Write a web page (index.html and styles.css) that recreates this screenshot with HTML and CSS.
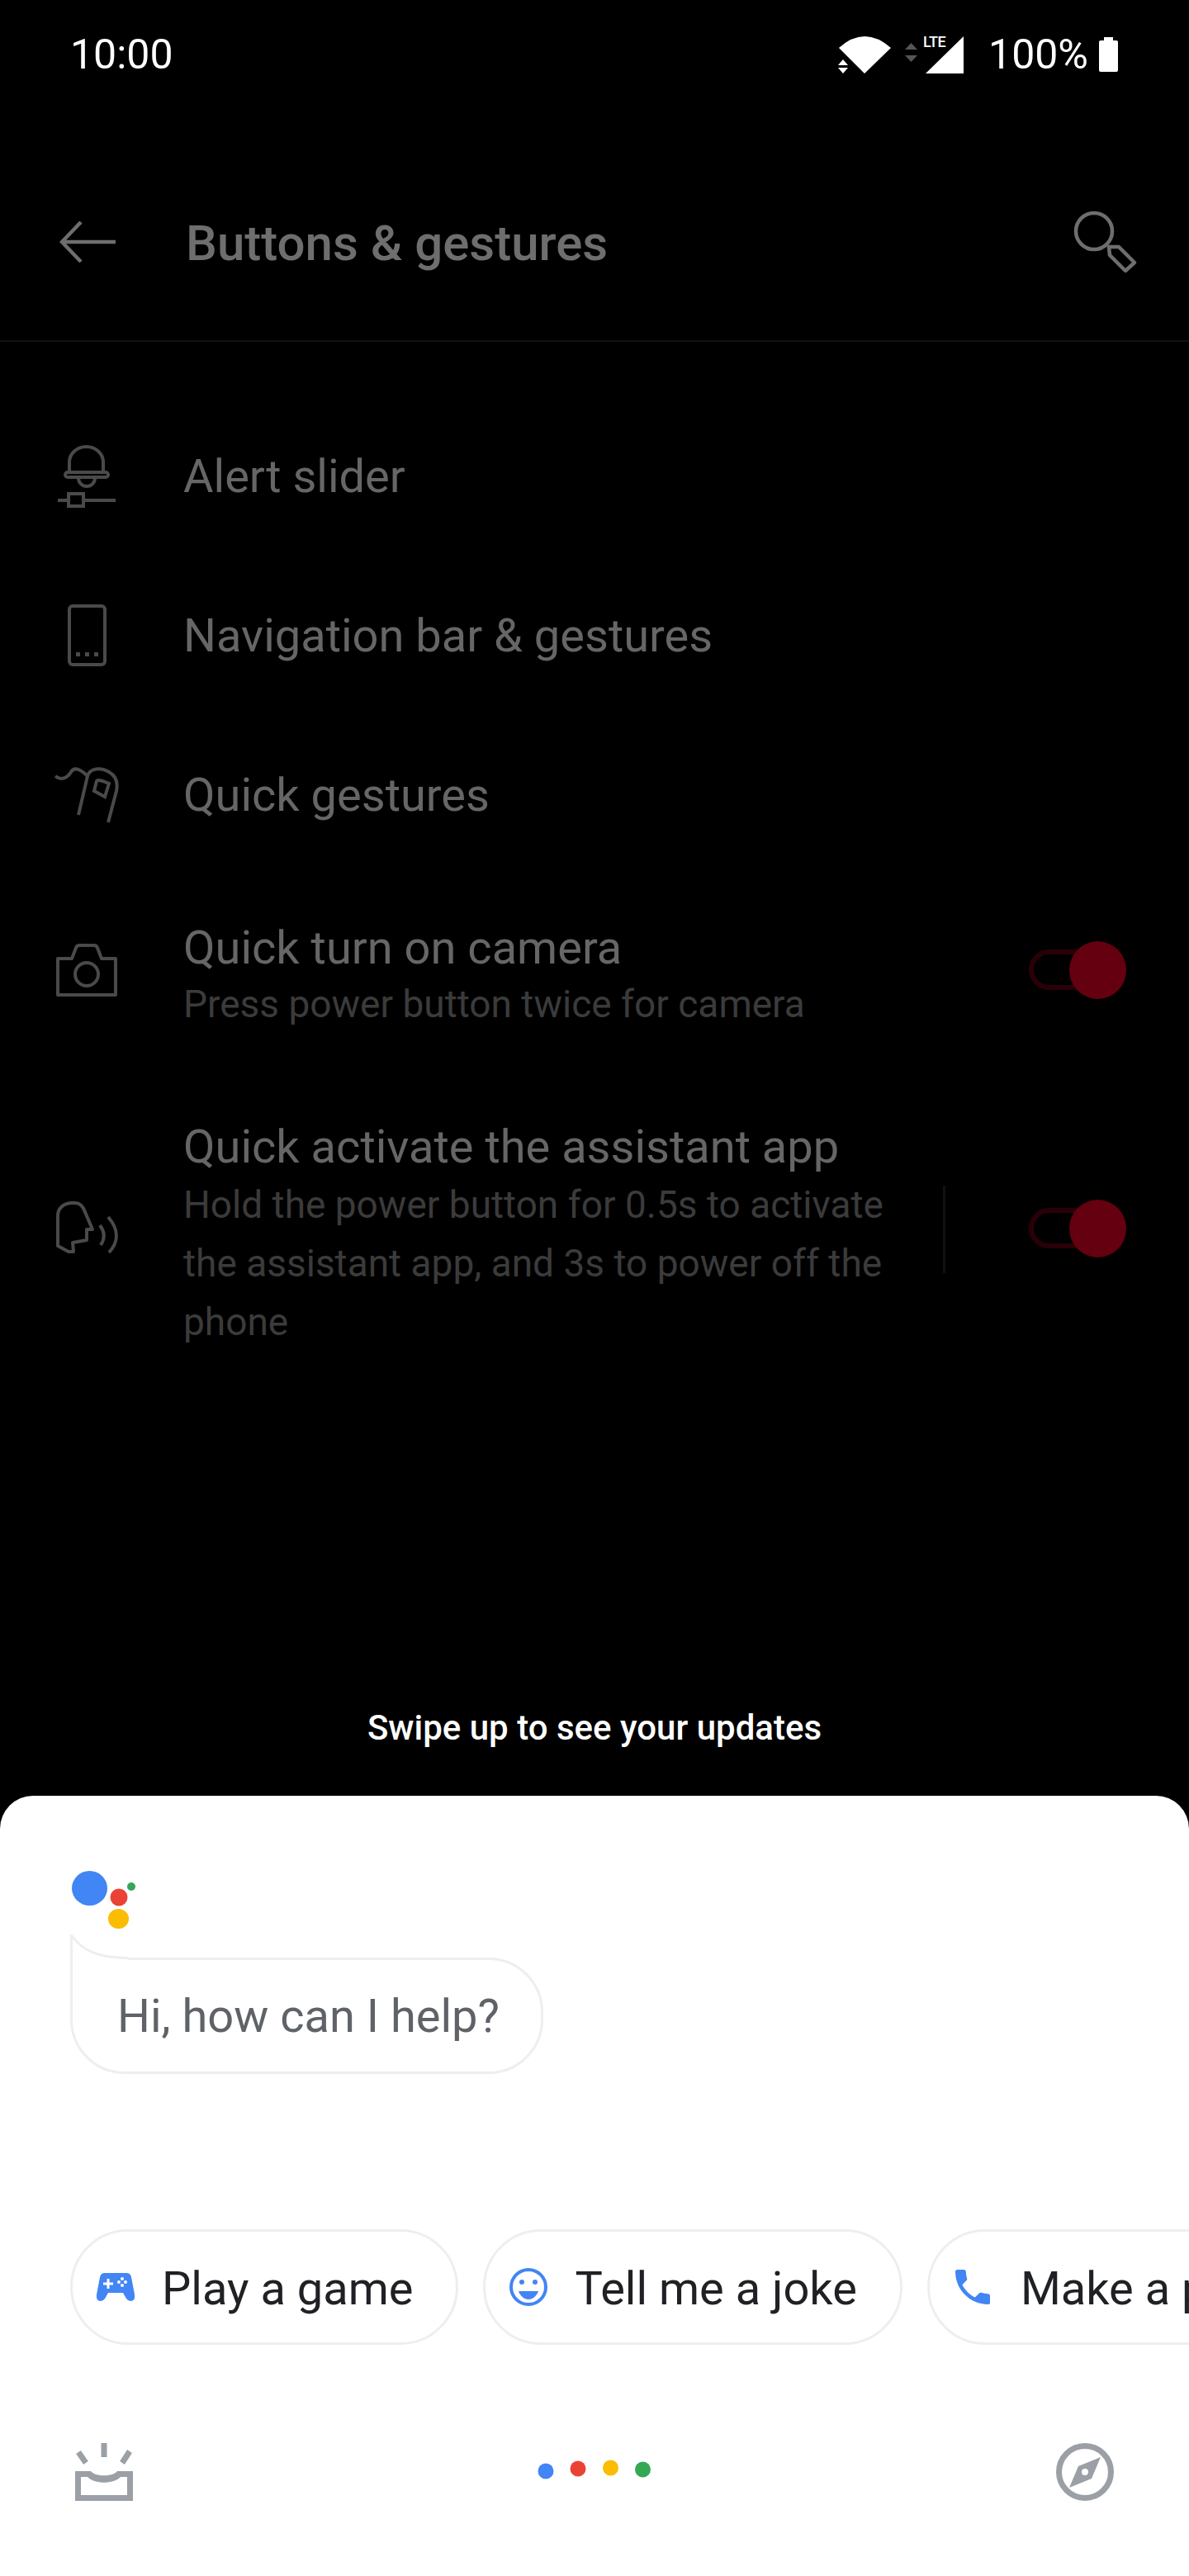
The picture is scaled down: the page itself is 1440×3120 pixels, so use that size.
FILE: index.html
```html
<!DOCTYPE html>
<html lang="en">
<head>
  <meta charset="UTF-8">
  <meta name="viewport" content="width=device-width, initial-scale=1.0">
  <title>Buttons &amp; gestures</title>
  <link rel="stylesheet" href="styles.css">
</head>
<body>

  <div class="screen">

    <div class="status-bar">
      <span class="clock">10:00</span>
      <div class="status-icons">
        <svg class="ic-wifi" width="64" height="45" viewBox="0 0 64 45">
          <path fill="#fff" d="M1 14Q32-14 64 14L32 45Z"/>
          <path fill="#000" d="M0 27H14V45H0Z"/>
          <path fill="#fff" d="M6 28L12 35H0ZM0 38H12L6 45Z"/>
        </svg>
        <svg class="ic-data" width="15" height="23" viewBox="0 0 15 23">
          <path fill="#555" d="M7.500 0L15 8H0ZM0 15H15L7.500 23Z"/>
        </svg>
        <div class="signal">
          <svg width="46" height="45" viewBox="0 0 46 45">
            <path fill="#fff" d="M46 0V45H0Z"/>
          </svg>
          <span class="lte">LTE</span>
        </div>
        <span class="battery-text">100%</span>
        <svg class="ic-battery" width="23" height="42" viewBox="0 0 23 42">
          <path fill="#fff" d="M6 0H17V4H21Q23 4 23 6V40Q23 42 21 42H2Q0 42 0 40V6Q0 4 2 4H6Z"/>
        </svg>
      </div>
    </div>

    <div class="toolbar">
      <svg class="back" width="68" height="50" viewBox="0 0 68 50">
        <path fill="none" stroke="#6e6e6e" stroke-width="4.500" d="M68 25H3M26 1L3 25L26 49"/>
      </svg>
      <h1 class="title">Buttons &amp; gestures</h1>
      <svg class="search" width="78" height="78" viewBox="0 0 78 78">
        <g fill="none" stroke="#6e6e6e" stroke-width="4.500" stroke-linejoin="round">
          <circle cx="26" cy="27" r="22"/>
          <path d="M44 46H56L75 65L64 75L45 56Z"/>
        </g>
      </svg>
    </div>

    <div class="list">
      <div class="row">
        <div class="row-icon">
          <svg width="70" height="76" viewBox="0 0 70 76">
            <g fill="none" stroke="#4a4a4a" stroke-width="4">
              <path d="M14 35V21A20.500 19 0 0 1 55 21V35"/>
              <rect x="9" y="33" width="52" height="6" rx="3"/>
              <path d="M25 40A10 10 0 0 0 45 40"/>
              <path d="M0 67H13M31 67H70"/>
              <rect x="13" y="59" width="18" height="15"/>
            </g>
          </svg>
        </div>
        <div class="row-text"><div class="row-title">Alert slider</div></div>
      </div>

      <div class="row">
        <div class="row-icon">
          <svg width="47" height="75" viewBox="0 0 47 75">
            <rect x="2" y="2" width="43" height="71" rx="4" fill="none" stroke="#4a4a4a" stroke-width="4"/>
            <path fill="#4a4a4a" d="M10 58H15V63H10ZM21 58H26V63H21ZM32 58H37V63H32Z"/>
          </svg>
        </div>
        <div class="row-text"><div class="row-title">Navigation bar &amp; gestures</div></div>
      </div>

      <div class="row">
        <div class="row-icon">
          <svg width="78" height="70" viewBox="0 0 78 70">
            <g fill="none" stroke="#4a4a4a" stroke-width="4">
              <path d="M1 12C8 18 16 14 20 7C24 0 32 4 40 12"/>
              <path d="M29 59L40 12C43 2 56 1 66 7C75 12 77 20 75 30L65 68"/>
              <path d="M48 30L51 18Q52 16 58 18L66 21L61 37Z"/>
            </g>
          </svg>
        </div>
        <div class="row-text"><div class="row-title">Quick gestures</div></div>
      </div>

      <div class="row row-camera">
        <div class="row-icon">
          <svg width="76" height="64" viewBox="0 0 76 64">
            <g fill="none" stroke="#4a4a4a" stroke-width="4" stroke-linejoin="round">
              <path d="M3 18H20L25 5Q26 2 29 2H47Q50 2 51 5L56 18H73V62H3Z"/>
              <circle cx="38" cy="37" r="14"/>
            </g>
          </svg>
        </div>
        <div class="row-text">
          <div class="row-title">Quick turn on camera</div>
          <div class="row-sub">Press power button twice for camera</div>
        </div>
        <div class="toggle"><span class="toggle-track"></span><span class="toggle-thumb"></span></div>
      </div>

      <div class="row row-assistant">
        <div class="row-icon">
          <svg width="90" height="76" viewBox="0 0 90 76">
            <g fill="none" stroke="#4a4a4a" stroke-width="4" stroke-linejoin="round">
              <path d="M10 60V23C10 14 18 8 27 8H31C38 8 41 13 43 19L52 40H45V53L28 56L29 67H23Z"/>
              <path d="M61 35Q70 47 62 59"/>
              <path d="M71 25C84 40 84 55 72 68"/>
            </g>
          </svg>
        </div>
        <div class="row-text">
          <div class="row-title">Quick activate the assistant app</div>
          <div class="row-sub">Hold the power button for 0.5s to activate the assistant app, and 3s to power off the phone</div>
        </div>
        <div class="row-divider"></div>
        <div class="toggle"><span class="toggle-track"></span><span class="toggle-thumb"></span></div>
      </div>
    </div>

    <div class="swipe-hint">Swipe up to see your updates</div>

    <div class="sheet">
      <svg class="logo" width="78" height="70" viewBox="0 0 78 70">
        <ellipse cx="21.500" cy="21" rx="21.500" ry="21" fill="#4285f4"/>
        <ellipse cx="57" cy="32" rx="10.500" ry="10.500" fill="#ea4335"/>
        <ellipse cx="72" cy="19" rx="5" ry="5" fill="#34a853"/>
        <ellipse cx="56.500" cy="58" rx="12.500" ry="12" fill="#fbbc04"/>
      </svg>

      <div class="bubble">
        <svg class="bubble-tail" width="70" height="34" viewBox="0 0 70 34">
          <path fill="#fff" d="M1.500 0V34H70V27C35 28 15 20 1.500 2Z"/>
          <path fill="none" stroke="#eee" stroke-width="3" d="M1.500 34V1C15 20 35 28.500 70 28.500"/>
        </svg>
        Hi, how can I help?
      </div>

      <div class="chips">
        <div class="chip">
          <svg width="46" height="36" viewBox="0 0 46 36">
            <path fill="#4285f4" d="M10 1H36Q41 1 42 6L46 27Q47 35 41 35Q38 35 36 32L32 25H14L10 32Q8 35 5 35Q-1 35 0 27L4 6Q5 1 10 1Z"/>
            <path fill="#fff" d="M12.500 8H15.500V12.500H20V15.500H15.500V20H12.500V15.500H8V12.500H12.500Z"/>
            <g fill="#fff">
              <circle cx="31" cy="8" r="2"/>
              <circle cx="31" cy="16" r="2"/>
              <circle cx="27" cy="12" r="2"/>
              <circle cx="35" cy="12" r="2"/>
            </g>
          </svg>
          <span>Play a game</span>
        </div>
        <div class="chip">
          <svg width="46" height="46" viewBox="0 0 46 46">
            <circle cx="23" cy="23" r="21" fill="none" stroke="#4285f4" stroke-width="4"/>
            <circle cx="15" cy="17" r="3" fill="#4285f4"/>
            <circle cx="31" cy="17" r="3" fill="#4285f4"/>
            <path fill="#4285f4" d="M11 28H35C33 34 28 38 23 38C18 38 13 34 11 28Z"/>
          </svg>
          <span>Tell me a joke</span>
        </div>
        <div class="chip chip-call">
          <svg width="42" height="42" viewBox="3 3 18 18">
            <path fill="#4285f4" d="M6.620 10.790c1.440 2.830 3.760 5.140 6.590 6.590l2.200-2.200c.27-.27.67-.36 1.020-.24 1.120.37 2.330.57 3.570.57.55 0 1 .45 1 1V20c0 .55-.45 1-1 1-9.390 0-17-7.610-17-17 0-.55.45-1 1-1h3.500c.55 0 1 .45 1 1 0 1.250.2 2.450.57 3.570.11.35.03.74-.25 1.020l-2.200 2.200z"/>
          </svg>
          <span>Make a phone call</span>
        </div>
      </div>

      <div class="bottom-nav">
        <svg width="70" height="70" viewBox="0 0 70 70">
          <path fill="none" stroke="#9aa0a6" stroke-width="7" d="M35 0V17M4 11L13 24M66 10L57 24"/>
          <path fill="#9aa0a6" fill-rule="evenodd" d="M0 34H19C24 41 46 41 51 34H70V70H0ZM7 41V63H63V41H55C47 50 23 50 15 41Z"/>
        </svg>
        <svg class="dots" width="138" height="24" viewBox="0 0 138 24">
          <circle cx="10" cy="14" r="9.500" fill="#4285f4"/>
          <circle cx="49" cy="11" r="9.500" fill="#ea4335"/>
          <circle cx="88.500" cy="10" r="9.500" fill="#fbbc04"/>
          <circle cx="127.500" cy="12" r="9.500" fill="#34a853"/>
        </svg>
        <svg width="70" height="70" viewBox="0 0 70 70">
          <circle cx="35" cy="35" r="31.500" fill="none" stroke="#9aa0a6" stroke-width="7"/>
          <path fill="#9aa0a6" d="M54 17L43 43L16 54L27 28Z"/>
          <circle cx="35" cy="35" r="4" fill="#fff"/>
        </svg>
      </div>
    </div>

  </div>

</body>
</html>
```

FILE: styles.css
```css
html, body {
  margin: 0;
  padding: 0;
  background-color: #000;
}
svg {
  display: block;
  flex-shrink: 0;
}
.screen {
  width: 1440px;
  height: 3120px;
  display: flex;
  flex-direction: column;
  overflow: hidden;
  background-color: #000;
  font-family: Roboto, "Liberation Sans", sans-serif;
}

/* status bar */
.status-bar {
  height: 132px;
  padding: 0 86px 0 85px;
  display: flex;
  align-items: center;
  justify-content: space-between;
  color: #fff;
  font-size: 50px;
}
.status-icons {
  display: flex;
  align-items: center;
}
.ic-data {
  margin: -6px 10px 0 17px;
}
.signal {
  position: relative;
}
.lte {
  position: absolute;
  left: -3px;
  top: -3px;
  font-size: 18px;
  font-weight: 500;
  letter-spacing: -0.5px;
  line-height: 20px;
}
.battery-text {
  margin: 0 13px 0 30px;
}

/* toolbar */
.toolbar {
  height: 238px;
  padding: 42px 63px 0 72px;
  border-bottom: 2px solid #111;
  display: flex;
  align-items: center;
}
.title {
  flex: 1;
  margin: 0 0 0 85px;
  padding-top: 2px;
  font-size: 60px;
  font-weight: 500;
  color: #6e6e6e;
}
.search {
  margin-top: -3px;
}

/* settings list */
.list {
  flex: 1;
  padding-top: 66px;
}
.row {
  height: 193px;
  display: flex;
  align-items: center;
}
.row-camera {
  height: 231px;
}
.row-camera .row-text {
  margin-top: 18px;
}
.row-icon {
  width: 222px;
  padding-right: 12px;
  box-sizing: border-box;
  display: flex;
  justify-content: center;
}
.row-text {
  flex: 1;
}
.row-title {
  font-size: 56px;
  color: #666;
  line-height: 66px;
}
.row-sub {
  font-size: 46px;
  line-height: 71px;
  color: #3b3b3b;
}
.row-assistant {
  height: 290px;
  align-items: flex-start;
}
.row-assistant .row-text {
  flex: none;
  width: 880px;
  padding-top: 66px;
}
.row-assistant .row-sub {
  margin-top: 2px;
}
.row-assistant .row-icon {
  margin-top: 159px;
}
.row-divider {
  width: 3px;
  height: 106px;
  margin: 146px 0 0 40px;
  background-color: #111;
}
.row-assistant .toggle {
  margin: 163px 76px 0 auto;
}
.toggle {
  position: relative;
  width: 118px;
  height: 70px;
  margin-right: 76px;
}
.toggle-track {
  position: absolute;
  left: 0;
  top: 10px;
  width: 100px;
  height: 37px;
  border: 6px solid #2a0008;
  border-radius: 25px;
}
.toggle-thumb {
  position: absolute;
  right: 0;
  top: 0;
  width: 69px;
  height: 70px;
  border-radius: 50%;
  background-color: #64000f;
}

.swipe-hint {
  margin-bottom: 52px;
  line-height: 60px;
  font-size: 42px;
  font-weight: 500;
  text-align: center;
  color: #fff;
}

/* assistant sheet */
.sheet {
  height: 945px;
  flex-shrink: 0;
  box-sizing: border-box;
  padding-top: 91px;
  background-color: #fff;
  border-radius: 40px 40px 0 0;
}
.logo {
  margin-left: 87px;
}
.bubble {
  position: relative;
  box-sizing: border-box;
  width: 573px;
  height: 141px;
  margin: 35px 0 0 85px;
  padding-left: 54px;
  border: 3px solid #eee;
  border-radius: 0 66px 66px 66px;
  display: flex;
  align-items: center;
  font-size: 56px;
  color: #5f6368;
}
.bubble-tail {
  position: absolute;
  left: -3px;
  top: -31px;
}
.chips {
  margin-top: 188px;
  padding-left: 85px;
  display: flex;
  gap: 30px;
}
.chip {
  flex-shrink: 0;
  box-sizing: border-box;
  height: 140px;
  padding: 0 52px 0 29px;
  border: 3px solid #eee;
  border-radius: 70px;
  display: flex;
  align-items: center;
  gap: 33px;
  font-size: 56px;
  white-space: nowrap;
  color: #202124;
}
.chip span {
  padding-top: 3px;
}
.chip-call {
  padding-left: 31px;
  gap: 37px;
}
.bottom-nav {
  margin-top: 119px;
  padding: 0 91px;
  display: flex;
  align-items: center;
  justify-content: space-between;
}
.dots {
  margin-bottom: 6px;
}
```
